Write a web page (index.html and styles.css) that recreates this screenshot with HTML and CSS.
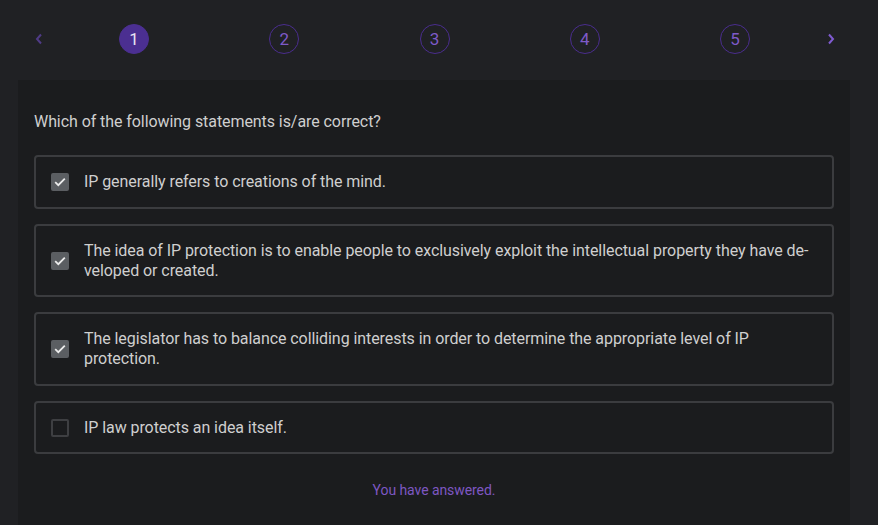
FILE: index.html
```html
<!DOCTYPE html>
<html lang="en">
<head>
<meta charset="utf-8">
<link rel="stylesheet" href="styles.css">
</head>
<body>
<nav class="steps">
  <span class="chev chev-left"><svg width="10" height="14" viewBox="0 0 10 14"><path d="M7 2.5 L3 7 L7 11.5" fill="none" stroke="currentColor" stroke-width="2"/></svg></span>
  <div class="dots">
    <span class="dot active">1</span>
    <span class="dot">2</span>
    <span class="dot">3</span>
    <span class="dot">4</span>
    <span class="dot">5</span>
  </div>
  <span class="chev chev-right"><svg width="10" height="14" viewBox="0 0 10 14"><path d="M3 2.5 L7 7 L3 11.5" fill="none" stroke="currentColor" stroke-width="2"/></svg></span>
</nav>
<main class="panel">
  <p class="question">Which of the following statements is/are correct?</p>
  <ul class="options">
    <li class="option"><span class="box checked"><svg width="12" height="10" viewBox="0 0 12 10"><path d="M1.2 5.2 L4.3 8.2 L10.8 1.6" fill="none" stroke="#ececec" stroke-width="1.8"/></svg></span><span class="label">IP generally refers to creations of the mind.</span></li>
    <li class="option"><span class="box checked"><svg width="12" height="10" viewBox="0 0 12 10"><path d="M1.2 5.2 L4.3 8.2 L10.8 1.6" fill="none" stroke="#ececec" stroke-width="1.8"/></svg></span><span class="label">The idea of IP protection is to enable people to exclusively exploit the intellectual property they have de&shy;veloped or created.</span></li>
    <li class="option"><span class="box checked"><svg width="12" height="10" viewBox="0 0 12 10"><path d="M1.2 5.2 L4.3 8.2 L10.8 1.6" fill="none" stroke="#ececec" stroke-width="1.8"/></svg></span><span class="label">The legislator has to balance colliding interests in order to determine the appropriate level of IP protection.</span></li>
    <li class="option"><span class="box"></span><span class="label">IP law protects an idea itself.</span></li>
  </ul>
  <p class="status">You have answered.</p>
</main>
</body>
</html>
```
FILE: styles.css
```css
html, body {
  margin: 0;
  padding: 0;
  background: #202124;
  font-family: Roboto, "Noto Sans", sans-serif;
  color: #d6d6d6;
  height: 100%;
  overflow: hidden;
}

.steps {
  height: 80px;
  display: flex;
  align-items: center;
  padding-left: 27px;
  box-sizing: border-box;
}

.chev {
  width: 24px;
  height: 24px;
  display: flex;
  align-items: center;
  justify-content: center;
  margin-top: -2px;
}
.chev-left { color: #4f3b86; margin-right: 68px; }
.chev-right { color: #7f5bd0; margin-left: 69px; }

.dots {
  display: flex;
  gap: 120.25px;
  margin-top: -2px;
}

.dot {
  width: 30px;
  height: 30px;
  box-sizing: border-box;
  border-radius: 50%;
  border: 1px solid #4a2d8e;
  color: #7e5ac8;
  font-size: 17px;
  display: flex;
  align-items: center;
  justify-content: center;
}
.dot.active {
  background: #4b2f91;
  border-color: #4b2f91;
  color: #e8e4f2;
}

.panel {
  margin: 0 28px 0 18px;
  background: #1b1c1e;
  padding: 31px 16px 40px;
  min-height: 445px;
  box-sizing: border-box;
  letter-spacing: -0.07px;
}

.question {
  margin: 0 0 22px;
  font-size: 16px;
  line-height: 22px;
  color: #cfcfcf;
}

.options {
  list-style: none;
  margin: 0;
  padding: 0;
  display: flex;
  flex-direction: column;
  gap: 15px;
}

.option {
  display: flex;
  align-items: center;
  border: 2px solid #3b3c3f;
  border-radius: 4px;
  padding: 15px 18px 14.5px 15px;
  font-size: 16px;
  line-height: 20px;
  color: #cfcfcf;
}

.box {
  flex: none;
  width: 18px;
  height: 18px;
  box-sizing: border-box;
  border-radius: 2px;
  border: 2px solid #3e3f42;
  margin-right: 15px;
  display: flex;
  align-items: center;
  justify-content: center;
}
.box.checked {
  background: #5b5e62;
  border-color: #5b5e62;
}

.label {
  hyphens: manual;
}

.status {
  margin: 26px 0 0;
  text-align: center;
  font-size: 14px;
  line-height: 20px;
  color: #7e57c2;
}
```
